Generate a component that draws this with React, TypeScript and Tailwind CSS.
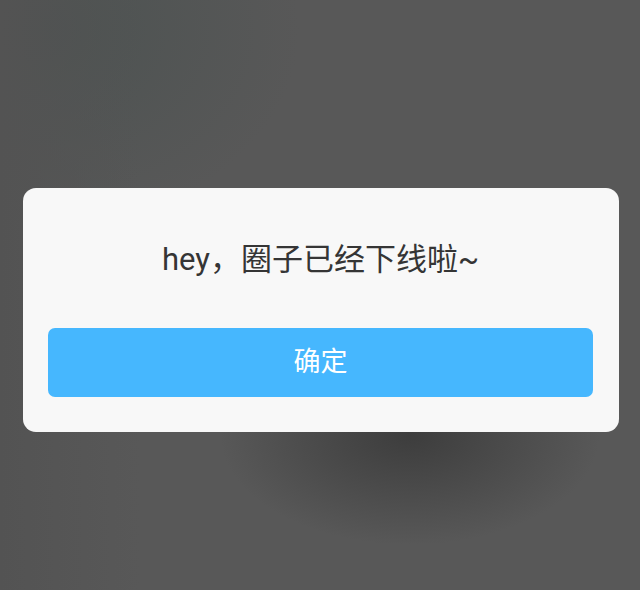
export default function App() {
  return (
    <div className="relative h-[590px] w-[640px] overflow-hidden bg-[#585858] font-['Roboto','Noto_Sans_CJK_SC',sans-serif]">
      {/* blurred page behind the modal */}
      <div className="absolute inset-0 bg-[radial-gradient(ellipse_260px_200px_at_40px_30px,#4c5251,transparent)]" />
      <div className="absolute inset-0 bg-[radial-gradient(ellipse_190px_110px_at_410px_435px,#3d3d3d,transparent)]" />
      <div className="absolute inset-0 bg-[linear-gradient(to_right,#535353,transparent_22%)]" />

      <div className="relative flex flex-col pt-[188px] px-[23px]">
        <div className="w-[596px] rounded-[13px] bg-[#f8f8f8] pt-[52px] pb-[35px] pl-[25px] pr-[26px]">
          <p className="text-center text-[31px] leading-[40px] text-[#353535]">
            hey，圈子已经下线啦~
          </p>
          <button className="mt-[48px] h-[69px] w-full rounded-[7px] bg-[#46b7fe] text-[27px] text-white">
            确定
          </button>
        </div>
      </div>
    </div>
  );
}
